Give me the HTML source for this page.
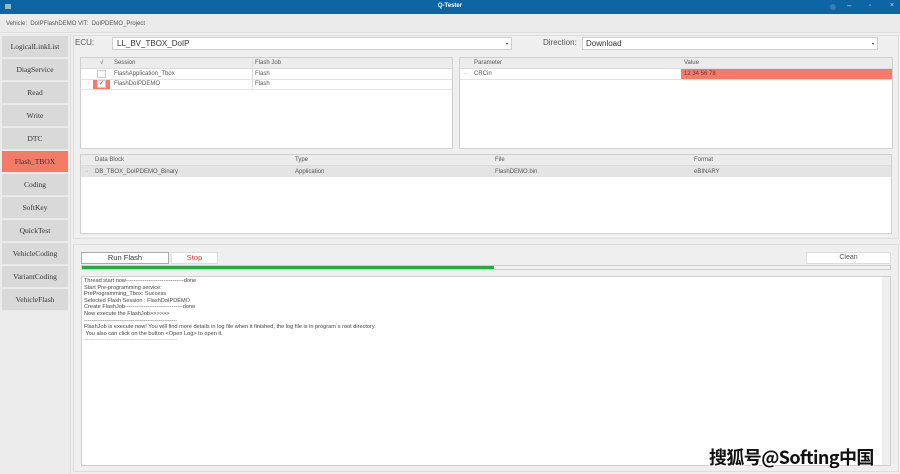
<!DOCTYPE html>
<html><head><meta charset="utf-8"><style>
*{margin:0;padding:0;box-sizing:border-box}
body{width:900px;height:474px;overflow:hidden;background:#efefef;font-family:"Liberation Sans",sans-serif;position:relative;color:#444}
.a{position:absolute}
.s{font-size:6px;color:#555}
.nav{position:absolute;left:2px;width:66px;height:22px;background:#d9d9d9;border-bottom:1px solid #e8e8e8;font-family:"Liberation Serif",serif;font-size:7.5px;color:#333;text-align:center;line-height:22px}
.w{background:#fff;border:1px solid #cfcfcf}
.hd{background:#ececec;border-bottom:1px solid #dcdcdc}
</style></head><body>
<div class="a" style="left:0;top:0;width:900px;height:14px;background:#0d65a3"></div>
<div class="a" style="left:0;top:3px;width:900px;text-align:center;color:#fff;font-size:6px;font-weight:bold">Q-Tester</div>
<div class="a" style="left:5px;top:4px;width:6px;height:5px;background:#9bb;"></div>
<div class="a" style="left:830px;top:4px;width:6px;height:6px;border-radius:3px;background:#3a7cb8"></div>
<div class="a" style="left:847px;top:1px;color:#cde;font-size:8px">–</div>
<div class="a" style="left:869px;top:3px;color:#cde;font-size:6px">▫</div>
<div class="a" style="left:890px;top:2px;color:#cde;font-size:7px">×</div>
<div class="a" style="left:0;top:14px;width:900px;height:19px;background:#ebebeb;border-bottom:1px solid #dedede"></div>
<div class="a s" style="left:6px;top:21px">Vehicle:&nbsp; DoIPFlashDEMO VIT:&nbsp; DoIPDEMO_Project</div>
<div class="a" style="left:0;top:34px;width:71px;height:440px;background:#ececec;border-right:1px solid #ddd"></div>
<div class="nav" style="top:36px">LogicalLinkList</div>
<div class="nav" style="top:59px">DiagService</div>
<div class="nav" style="top:82px">Read</div>
<div class="nav" style="top:105px">Write</div>
<div class="nav" style="top:128px">DTC</div>
<div class="nav" style="top:151px;background:#f47b66">Flash_TBOX</div>
<div class="nav" style="top:174px">Coding</div>
<div class="nav" style="top:197px">SoftKey</div>
<div class="nav" style="top:220px">QuickTest</div>
<div class="nav" style="top:243px">VehicleCoding</div>
<div class="nav" style="top:266px">VariantCoding</div>
<div class="nav" style="top:289px">VehicleFlash</div>
<div class="a" style="left:73px;top:35px;width:826px;height:204px;border:1px solid #ddd"></div>
<div class="a" style="left:75px;top:38px;font-size:8px;color:#555">ECU:</div>
<div class="a w" style="left:112px;top:37px;width:400px;height:13px;font-size:8px;padding:1px 4px;color:#333">LL_BV_TBOX_DoIP<span style="position:absolute;right:3px;top:3px;font-size:4px">▾</span></div>
<div class="a" style="left:543px;top:38px;font-size:8px;color:#555">Direction:</div>
<div class="a w" style="left:582px;top:37px;width:296px;height:13px;font-size:8px;padding:1px 3px;color:#333">Download<span style="position:absolute;right:3px;top:3px;font-size:4px">▾</span></div>
<div class="a w" style="left:80px;top:57px;width:373px;height:92px"></div>
<div class="a hd" style="left:81px;top:58px;width:371px;height:11px"></div>
<div class="a s" style="left:100px;top:60px">√</div>
<div class="a s" style="left:114px;top:60px">Session</div>
<div class="a s" style="left:255px;top:60px">Flash Job</div>
<div class="a" style="left:252px;top:58px;width:1px;height:32px;background:#ddd"></div>
<div class="a" style="left:81px;top:79px;width:371px;height:1px;background:#e3e3e3"></div>
<div class="a" style="left:81px;top:89px;width:371px;height:1px;background:#e3e3e3"></div>
<div class="a" style="left:97px;top:70px;width:9px;height:8px;border:1px solid #ccc;background:#fff"></div>
<div class="a s" style="left:114px;top:71px">FlashApplication_Tbox</div>
<div class="a s" style="left:255px;top:71px">Flash</div>
<div class="a" style="left:93px;top:80px;width:17px;height:9px;background:#f47b66"></div>
<div class="a" style="left:97px;top:80px;width:9px;height:8px;border:1px solid #ccc;background:#fff;font-size:6px;line-height:6px;text-align:center">✓</div>
<div class="a" style="left:85px;top:80px;font-size:5px;color:#e77">→</div>
<div class="a s" style="left:114px;top:81px">FlashDoIPDEMO</div>
<div class="a s" style="left:255px;top:81px">Flash</div>
<div class="a w" style="left:459px;top:57px;width:434px;height:92px"></div>
<div class="a hd" style="left:460px;top:58px;width:432px;height:11px"></div>
<div class="a s" style="left:474px;top:60px">Parameter</div>
<div class="a s" style="left:684px;top:60px">Value</div>
<div class="a" style="left:681px;top:69px;width:211px;height:10px;background:#f47b66"></div>
<div class="a" style="left:463px;top:70px;font-size:5px;color:#e77">→</div>
<div class="a s" style="left:474px;top:71px">CRCin</div>
<div class="a s" style="left:684px;top:71px;color:#733">12 34 56 78</div>
<div class="a" style="left:460px;top:79px;width:432px;height:1px;background:#e3e3e3"></div>
<div class="a w" style="left:80px;top:154px;width:812px;height:80px"></div>
<div class="a hd" style="left:81px;top:155px;width:810px;height:11px"></div>
<div class="a" style="left:81px;top:166px;width:810px;height:11px;background:#e4e4e4"></div>
<div class="a s" style="left:95px;top:157px">Data Block</div>
<div class="a s" style="left:295px;top:157px">Type</div>
<div class="a s" style="left:495px;top:157px">File</div>
<div class="a s" style="left:694px;top:157px">Format</div>
<div class="a" style="left:84px;top:168px;font-size:5px;color:#e77">→</div>
<div class="a s" style="left:95px;top:169px">DB_TBOX_DoIPDEMO_Binary</div>
<div class="a s" style="left:295px;top:169px">Application</div>
<div class="a s" style="left:495px;top:169px">FlashDEMO.bin</div>
<div class="a s" style="left:694px;top:169px">eBINARY</div>
<div class="a" style="left:73px;top:244px;width:826px;height:228px;border:1px solid #ddd"></div>
<div class="a" style="left:81px;top:252px;width:88px;height:12px;background:#fff;border:1px solid #aaa;font-size:7.5px;text-align:center;line-height:10px;color:#333">Run Flash</div>
<div class="a" style="left:171px;top:252px;width:47px;height:12px;background:#fff;border:1px solid #ddd;font-size:7.5px;text-align:center;line-height:10px;color:#e33">Stop</div>
<div class="a" style="left:806px;top:252px;width:85px;height:12px;background:#fff;border:1px solid #ddd;font-size:7px;text-align:center;line-height:10px;color:#555">Clean</div>
<div class="a" style="left:81px;top:265px;width:810px;height:5px;border:1px solid #ccc;background:#f0f0f0"></div>
<div class="a" style="left:82px;top:266px;width:412px;height:3px;background:#1cae3e"></div>
<div class="a w" style="left:81px;top:276px;width:810px;height:190px"></div>
<div class="a" style="left:882px;top:277px;width:8px;height:188px;background:#efefef"></div>
<div class="a" style="left:84px;top:278px;font-size:5.6px;line-height:6.6px;color:#444;white-space:pre">Thread start now-------------------------------done
Start Pre-programming service:
PreProgramming_Tbox: Success
Selected Flash Session : FlashDoIPDEMO
Create FlashJob-------------------------------done
Now execute the FlashJob&gt;&gt;&gt;&gt;&gt;&gt;
--------------------------------------------------
FlashJob is execute now! You will find more details in log file when it finished, the log file is in program`s root directory.
 You also can click on the button &lt;Open Log&gt; to open it.
<span style="color:#99a">--------------------------------------------------</span></div>
<div class="a" style="left:709px;top:444px;font-family:'Noto Sans CJK SC',sans-serif;font-weight:bold;font-size:18px;color:#111;text-shadow:1px 1px 0 #fff,-1px -1px 0 #fff,1px -1px 0 #fff,-1px 1px 0 #fff;letter-spacing:-0.6px">搜狐号@Softing中国</div>
</body></html>
